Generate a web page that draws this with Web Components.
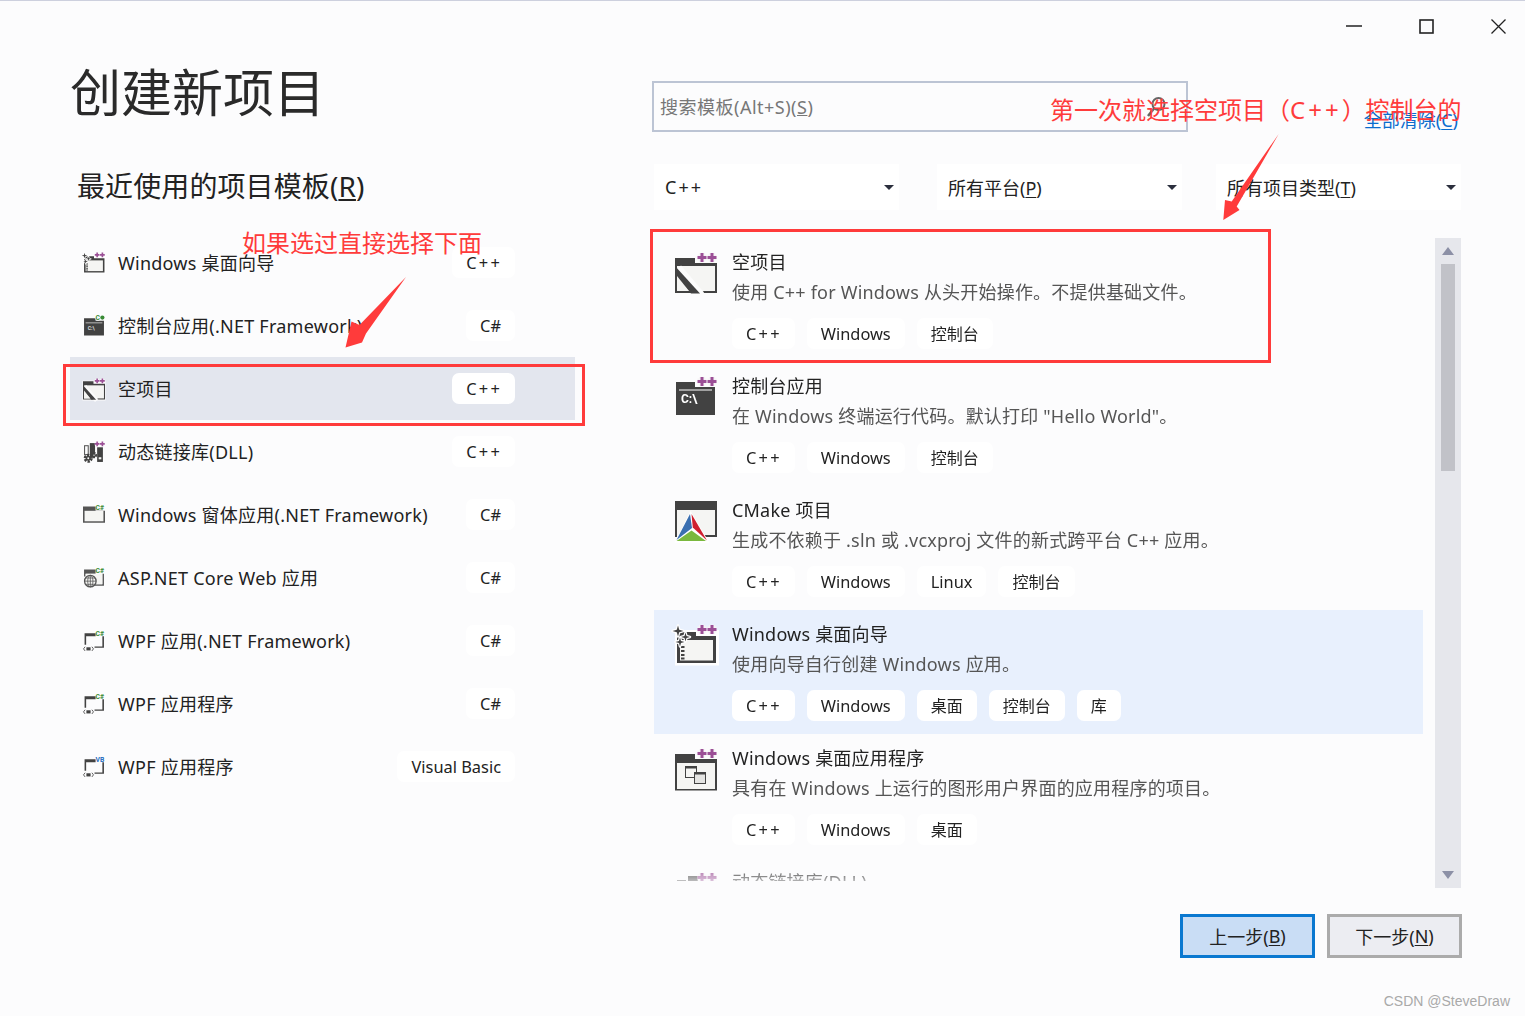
<!DOCTYPE html>
<html lang="zh-CN">
<head>
<meta charset="utf-8">
<title>创建新项目</title>
<style>
html,body{margin:0;padding:0;background:#fcfcfd}
body{font-family:"Noto Sans","Noto Sans CJK SC",sans-serif;color:#222;font-size:18px;width:1525px;height:1016px;overflow:hidden}
u{text-underline-offset:2px}
</style>
</head>
<body>
<vs-dialog>
  <vs-window-controls slot="controls"></vs-window-controls>

  <span slot="title">创建新项目</span>
  <span slot="heading">最近使用的项目模板(<u>R</u>)</span>

  <vs-recent-item slot="recent" icon="wizardS" tag="C++">Windows 桌面向导</vs-recent-item>
  <vs-recent-item slot="recent" icon="consoleCs" tag="C#">控制台应用(.NET Framework)</vs-recent-item>
  <vs-recent-item slot="recent" icon="empty" tag="C++" selected>空项目</vs-recent-item>
  <vs-recent-item slot="recent" icon="dll" tag="C++">动态链接库(DLL)</vs-recent-item>
  <vs-recent-item slot="recent" icon="forms" tag="C#">Windows 窗体应用(.NET Framework)</vs-recent-item>
  <vs-recent-item slot="recent" icon="asp" tag="C#">ASP.NET Core Web 应用</vs-recent-item>
  <vs-recent-item slot="recent" icon="wpf" tag="C#">WPF 应用(.NET Framework)</vs-recent-item>
  <vs-recent-item slot="recent" icon="wpf" tag="C#">WPF 应用程序</vs-recent-item>
  <vs-recent-item slot="recent" icon="wpfvb" tag="Visual Basic">WPF 应用程序</vs-recent-item>

  <vs-search slot="search"></vs-search>
  <vs-link slot="clear">全部清除(<u>C</u>)</vs-link>

  <vs-dropdown slot="filter"><span style="letter-spacing:2px">C++</span></vs-dropdown>
  <vs-dropdown slot="filter">所有平台(<u>P</u>)</vs-dropdown>
  <vs-dropdown slot="filter" style="margin-left:-4px">所有项目类型(<u>T</u>)</vs-dropdown>

  <vs-template slot="templates" icon="empty" name="空项目" desc="使用 C++ for Windows 从头开始操作。不提供基础文件。" tags="C++|Windows|控制台"></vs-template>
  <vs-template slot="templates" icon="console" name="控制台应用" desc="在 Windows 终端运行代码。默认打印 &quot;Hello World&quot;。" tags="C++|Windows|控制台"></vs-template>
  <vs-template slot="templates" icon="cmake" name="CMake 项目" desc="生成不依赖于 .sln 或 .vcxproj 文件的新式跨平台 C++ 应用。" tags="C++|Windows|Linux|控制台"></vs-template>
  <vs-template slot="templates" icon="wizard" name="Windows 桌面向导" desc="使用向导自行创建 Windows 应用。" tags="C++|Windows|桌面|控制台|库" active></vs-template>
  <vs-template slot="templates" icon="desktop" name="Windows 桌面应用程序" desc="具有在 Windows 上运行的图形用户界面的应用程序的项目。" tags="C++|Windows|桌面"></vs-template>
  <vs-template slot="templates" icon="dllBig" name="动态链接库(DLL)" desc="" tags=""></vs-template>

  <vs-scrollbar slot="scrollbar"></vs-scrollbar>

  <vs-button slot="actions" primary>上一步(<u>B</u>)</vs-button>
  <vs-button slot="actions">下一步(<u>N</u>)</vs-button>

  <vs-annotations slot="overlay"></vs-annotations>
</vs-dialog>

<script>
function def(name, css, html, setup){
  customElements.define(name, class extends HTMLElement{
    constructor(){
      super();
      const r=this.attachShadow({mode:'open'});
      r.innerHTML='<style>'+css+'</style>'+(typeof html==='string'?html:'');
    }
    connectedCallback(){
      if(setup&&!this._done){this._done=true;setup.call(this,this.shadowRoot)}
    }
  });
}
const PLUS='<path d="M27 1v9M22.5 5.5h9M37 1v9M32.5 5.5h9" stroke="#f6f4f6" stroke-width="6"/><path d="M27 1v9M22.5 5.5h9M37 1v9M32.5 5.5h9" stroke="#9b4f96" stroke-width="3"/>';
const D='#424242',L='#f5f5f3';
const star=(x,y,r)=>{const k=r*.22;const p=`M${x} ${y-r}L${x+k} ${y-k}L${x+r} ${y}L${x+k} ${y+k}L${x} ${y+r}L${x-k} ${y+k}L${x-r} ${y}L${x-k} ${y-k}Z`;return `<path d="${p}" fill="${D}" stroke="#fff" stroke-width="2.500" stroke-linejoin="round" paint-order="stroke"/>`};
const badge=(t,c,x)=>`<text x="${x||24}" y="11" font-family="Roboto,sans-serif" font-size="13" font-weight="700" fill="${c}">${t}</text>`;
const WIZARD=`<rect x="0" y="6" width="44" height="35.500" fill="#fff"/><path d="M2 8H21V12H41V39H2Z" fill="${D}"/><rect x="5" y="16" width="33" height="20.500" fill="${L}"/><path d="M6 22h3.500v2H6zM6 26h3.500v2H6zM6 30h3.500v2H6zM6 33.500h3.500v2H6z" fill="${D}"/>${star(3,7,5.500)}${star(10.500,13,4.500)}${star(5,18,4.500)}${PLUS}`;
const CONSOLE=`<path d="M1 6H20V11H40V39H1Z" fill="${D}"/><path d="M4 14H37" stroke="#fff" stroke-width="1"/>`;
const EMPTY=`<rect x="-1" y="5" width="44" height="38" fill="#fcfcfc"/><path d="M0 6H20V11H42V41H0Z" fill="${D}"/><rect x="2" y="14" width="38" height="25" fill="${L}"/><path d="M3 16L26 43" stroke="#fcfcfc" stroke-width="8"/><path d="M0 14L25 41.500H16L0 24Z" fill="${D}"/><path d="M2 24V39H14Z" fill="${L}"/>`;
const FRAME=`<path d="M0 5H24V13H42V36H0Z" fill="#555"/><rect x="3" y="13" width="36" height="20" fill="${L}"/>`;
const ASP=`<path d="M2 5H24V13H40V36H22V33H37V13H5V18H2Z" fill="#555"/><rect x="5" y="13" width="32" height="20" fill="${L}"/><circle cx="14" cy="27" r="11" fill="${L}" stroke="#555" stroke-width="2.500"/><path d="M3 27H25M5 21H23M5 33H23M14 16V38" stroke="#555" stroke-width="1.500"/><ellipse cx="14" cy="27" rx="5" ry="11" fill="none" stroke="#555" stroke-width="1.500"/>`;
const WPF=`<path d="M3 6H24V12H40V34H22V31.500H37V12H6V28H3Z" fill="${D}"/><path d="M4 32L1 36L4 40M17 32L20 36L17 40" fill="none" stroke="${D}" stroke-width="1.600"/><rect x="6.500" y="33" width="8" height="6" fill="${D}"/>`;
const gear=(x,y,r)=>`<circle cx="${x}" cy="${y}" r="${r}" fill="none" stroke="${D}" stroke-width="${r*.9}" stroke-dasharray="${r*.7} ${r*.35}"/><circle cx="${x}" cy="${y}" r="${r*.8}" fill="${D}"/><circle cx="${x}" cy="${y}" r="${r*.3}" fill="#fff"/>`;
const DLLG=`<rect x="3" y="9" width="7" height="17" fill="none" stroke="#555" stroke-width="2"/><rect x="13" y="4" width="10" height="28" fill="${D}"/><rect x="27" y="12" width="11" height="28" fill="${D}"/><rect x="30" y="31" width="5" height="4" fill="${L}"/>${gear(10,33,6)}${gear(21,27,4)}`;
const ICONS={
  empty:EMPTY+PLUS,
  console:CONSOLE+`<text x="6" y="27" font-family="Roboto,sans-serif" font-size="12" font-weight="700" fill="#fff">C:\\</text>`+PLUS,
  consoleCs:`<path d="M2 6H24V11H40V39H2Z" fill="${D}"/><path d="M5 15H37" stroke="#fff" stroke-width="1.200"/><text x="9" y="29" font-family="Roboto,sans-serif" font-size="10" font-weight="700" fill="#ddd">C:\\</text><text x="24" y="10" font-family="Roboto,sans-serif" font-size="13" font-weight="700" fill="#388a34" stroke="#fcfcfd" stroke-width="2" paint-order="stroke">C</text><circle cx="37" cy="5" r="4" fill="#388a34"/>`,
  cmake:`<path d="M0 1H42V37H40V10H2V37H0Z" fill="${D}"/><rect x="2" y="10" width="38" height="25" fill="${L}"/><rect x="40" y="10" width="2" height="27" fill="${D}"/><rect x="19" y="35" width="23" height="2" fill="${D}"/><path d="M15.500 11L-.5 43H34.500Z" fill="#fff"/><path d="M15 14L1.500 40L17 28Z" fill="#3a6fb0"/><path d="M16.500 14L32 40.500L17.800 27.500Z" fill="#cf2030"/><path d="M1.500 41L16.500 30.500L31 41Z" fill="#7ab83e"/>`,
  wizard:WIZARD,
  wizardS:WIZARD,
  desktop:`<path d="M0 6H20V11H42V42.500H0Z" fill="${D}"/><rect x="2" y="15" width="38" height="26" fill="${L}"/><path d="M23 6H25V11H23Z" fill="#fcfcfc"/><rect x="10.500" y="18.500" width="11" height="11" fill="${L}" stroke="${D}"/><rect x="10" y="18" width="12" height="2.500" fill="${D}"/><rect x="19.500" y="24.500" width="11" height="11" fill="#e4e4e2" stroke="${D}"/><rect x="19" y="24" width="12" height="2.500" fill="${D}"/>`+PLUS,
  dll:DLLG+PLUS,
  dllBig:DLLG+PLUS,
  forms:FRAME+badge('C#','#388a34'),
  asp:ASP+badge('C#','#388a34'),
  wpf:WPF+badge('C#','#388a34'),
  wpfvb:WPF+badge('VB','#1f6dbf')
};

def('vs-icon',':host{display:block;flex:none}svg{display:block;overflow:visible}','',function(r){
  const s=this.getAttribute('size')||42;
  r.innerHTML+=`<svg width="${s}" height="${s}" viewBox="0 0 42 42" fill="none" aria-hidden="true">${ICONS[this.getAttribute('name')]||''}</svg>`;
});

def('vs-tag',`:host{display:inline-flex;align-items:center;height:31px;padding:0 14px;background:#fff;border-radius:7px;font-size:16.400px;color:#222;white-space:nowrap;box-sizing:border-box;flex:none}
:host([zh]){font-size:16px;padding-bottom:2px}
:host([plus]){letter-spacing:2.200px;padding-right:13px}`,'<slot></slot>');

def('vs-dialog',`:host{display:flex;flex-direction:column;position:relative;width:1525px;height:1016px;box-sizing:border-box;border-top:1px solid #cdd0de;background:#fcfcfd;overflow:hidden}
.bar{height:50px;flex:none}
.main{display:flex;gap:77px;padding-left:70px;flex:1;min-height:0}
.left{width:505px;flex:none;padding-top:8px}
.right{width:810px;flex:none;padding-top:30px}
h1{margin:0;font-size:51px;line-height:66px;font-weight:400;color:#2a2a2a}
h2{margin:41px 0 25px 7px;font-size:28px;line-height:40px;font-weight:400;color:#222;letter-spacing:.1px}
.recent{display:flex;flex-direction:column}
.top{display:flex;justify-content:space-between;height:51px;padding-right:4px}
.filters{display:flex;gap:38px;margin:32px 0 0 2px}
.body{display:flex;gap:12px;margin:28px 0 0 2px}
.list{width:769px;height:643px;overflow:hidden;display:flex;flex-direction:column;flex:none;
 -webkit-mask-image:linear-gradient(#000 0,#000 625px,rgba(0,0,0,.35) 643px);mask-image:linear-gradient(#000 0,#000 625px,rgba(0,0,0,.35) 643px)}
.acts{display:flex;justify-content:flex-end;gap:12px;margin-top:26px}
.wm{position:absolute;right:15px;bottom:6px;font:14px/18px "Liberation Sans",sans-serif;color:#a9a9a9}`,
`<div class="bar"><slot name="controls"></slot></div>
<div class="main">
  <section class="left">
    <h1><slot name="title"></slot></h1>
    <h2><slot name="heading"></slot></h2>
    <div class="recent"><slot name="recent"></slot></div>
  </section>
  <section class="right">
    <div class="top"><slot name="search"></slot><slot name="clear"></slot></div>
    <div class="filters"><slot name="filter"></slot></div>
    <div class="body">
      <div class="list"><slot name="templates"></slot></div>
      <slot name="scrollbar"></slot>
    </div>
    <div class="acts"><slot name="actions"></slot></div>
  </section>
</div>
<div class="wm">CSDN @SteveDraw</div>
<slot name="overlay"></slot>`);

def('vs-window-controls',`:host{display:flex;justify-content:flex-end;align-items:center;gap:57px;height:50px;padding-right:19px;box-sizing:border-box}svg{display:block}`,
`<svg width="16" height="16" viewBox="0 0 16 16"><path d="M0 8H16" stroke="#222" stroke-width="1.500"/></svg>
<svg width="15" height="15" viewBox="0 0 15 15"><rect x="1" y="1" width="13" height="13" fill="none" stroke="#222" stroke-width="1.600"/></svg>
<svg width="15" height="15" viewBox="0 0 15 15"><path d="M.5 .5L14.500 14.500M14.500 .5L.5 14.500" stroke="#222" stroke-width="1.300"/></svg>`);

def('vs-recent-item',`:host{display:flex;align-items:center;height:63px;padding:0 60px 0 13px;gap:13px;box-sizing:border-box;color:#222}
:host([selected]){background:#e3e6ee}
.t{flex:1;white-space:nowrap;letter-spacing:.25px;margin-top:-2px}`,'',function(r){
  r.innerHTML+=`<vs-icon name="${this.getAttribute('icon')}" size="22"></vs-icon><span class="t"><slot></slot></span>`;
  const t=document.createElement('vs-tag');const v=this.getAttribute('tag');t.textContent=v;if(v==='C++')t.setAttribute('plus','');r.appendChild(t);
});

def('vs-search',`:host{display:flex;align-items:center;width:536px;height:51px;box-sizing:border-box;border:2px solid #bcc4d4;padding:0 6px 2px;color:#777;position:relative;letter-spacing:.5px}
svg{position:absolute;left:490px;top:12px}`,
`<span>搜索模板(Alt+S)(<u>S</u>)</span><svg width="24" height="24" viewBox="0 0 24 24" fill="none"><circle cx="14.500" cy="9" r="6" stroke="#666" stroke-width="2"/><path d="M10 13.500L4 21" stroke="#666" stroke-width="2.500"/></svg>`);

def('vs-link',`:host{display:block;align-self:flex-end;line-height:24px;color:#0a6cce;white-space:nowrap}`,'<slot></slot>');

def('vs-dropdown',`:host{display:flex;align-items:center;justify-content:space-between;width:245px;height:46px;padding:0 5px 0 11px;box-sizing:border-box;background:#fff;color:#222;flex:none}
i{width:0;height:0;border:5px solid transparent;border-top:5px solid #2b2f3d;border-bottom:0}`,'<span><slot></slot></span><i></i>');

def('vs-template',`:host{display:block;height:124px;flex:none;box-sizing:border-box}
:host([active]){background:#e8f0fd}
.wrap{display:flex;padding:14px 0 0 21px;gap:15px}
.c{flex:1}
.n{line-height:24px;margin-top:-2px;color:#222;letter-spacing:.2px}
.d{line-height:24px;margin-top:6px;color:#555;white-space:nowrap;letter-spacing:.2px}
.tags{display:flex;gap:12px;margin-top:14px}`,'',function(r){
  const g=a=>this.getAttribute(a)||'';
  const tags=g('tags')?g('tags').split('|'):[];
  const w=document.createElement('div');w.className='wrap';
  w.innerHTML=`<vs-icon name="${g('icon')}"></vs-icon><div class="c"><div class="n"></div><div class="d"></div><div class="tags"></div></div>`;
  w.querySelector('.n').textContent=g('name');
  w.querySelector('.d').textContent=g('desc');
  tags.forEach(x=>{const t=document.createElement('vs-tag');t.textContent=x;if(/[^\x00-\x7f]/.test(x))t.setAttribute('zh','');if(x==='C++')t.setAttribute('plus','');w.querySelector('.tags').appendChild(t)});
  r.appendChild(w);
});

def('vs-scrollbar',`:host{display:flex;flex-direction:column;align-items:center;width:26px;height:650px;background:#e6e7ec;flex:none}
.a{height:26px;display:flex;align-items:center;justify-content:center;flex:none}
.up{width:0;height:0;border:6.500px solid transparent;border-top:0;border-bottom:8px solid #8c90a6}
.dn{width:0;height:0;border:6.500px solid transparent;border-bottom:0;border-top:8px solid #8c90a6}
.th{width:14px;height:207px;background:#c1c2c8;flex:none}
.sp{flex:1}`,`<div class="a"><div class="up"></div></div><div class="th"></div><div class="sp"></div><div class="a"><div class="dn"></div></div>`);

def('vs-button',`:host{display:flex;align-items:center;justify-content:center;width:135px;height:44px;box-sizing:border-box;border:3px solid #ababab;background:#ecedf2;color:#222}
:host([primary]){border-color:#0a78d0;background:#c9ddf5}`,'<slot></slot>');

def('vs-annotations',`:host{position:absolute;left:0;top:-1px;width:1525px;height:1016px;pointer-events:none;color:#ff3b3b;font-size:24px;font-family:"Noto Sans","Noto Sans CJK SC",sans-serif}
.box{position:absolute;border:3px solid #ff3b3b;box-sizing:border-box}
.tx{position:absolute;white-space:nowrap;line-height:32px}
.tx b{font-weight:400;letter-spacing:3px}
svg{position:absolute;left:0;top:0}`,
`<div class="box" style="left:63px;top:364px;width:522px;height:62px"></div>
<div class="box" style="left:650px;top:229px;width:621px;height:134px"></div>
<div class="tx" style="left:242px;top:227px">如果选过直接选择下面</div>
<div class="tx" style="left:1050px;top:94px">第一次就选择空项目（<b>C++</b>）控制台的</div>
<svg width="1525" height="1016" viewBox="0 0 1525 1016">
<path d="M406 277L359.500 325L351.500 321.500L345.500 347.500L362 342.500L366 333.500Z" fill="#ff3b3b"/>
<path d="M1278.700 134L1231.700 201.500L1225 200L1223.300 220L1239.500 210L1236.700 206.500Z" fill="#ff3b3b"/>
</svg>`);
</script>
</body>
</html>
